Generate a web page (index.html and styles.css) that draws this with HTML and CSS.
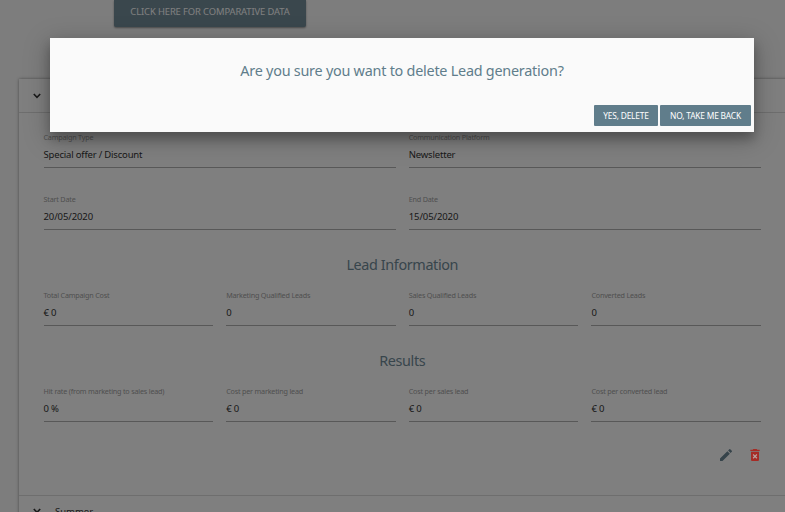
FILE: index.html
```html
<!DOCTYPE html>
<html lang="en">
<head>
<meta charset="utf-8">
<title>Campaigns</title>
<link rel="stylesheet" href="styles.css">
</head>
<body>
<main class="page">
  <button class="compare">CLICK HERE FOR COMPARATIVE DATA</button>
  <section class="card">
    <header class="row-head">
      <svg class="chevron" viewBox="0 0 8 6"><path d="M0.8 1l3.2 3.3L7.2 1"/></svg>
    </header>
    <div class="details">
      <div class="fields two first">
        <div class="field"><label>Campaign Type</label><p>Special offer / Discount</p></div>
        <div class="field"><label>Communication Platform</label><p>Newsletter</p></div>
      </div>
      <div class="fields two second">
        <div class="field"><label>Start Date</label><p>20/05/2020</p></div>
        <div class="field"><label>End Date</label><p>15/05/2020</p></div>
      </div>
      <h2>Lead Information</h2>
      <div class="fields four leads">
        <div class="field"><label>Total Campaign Cost</label><p>€ 0</p></div>
        <div class="field"><label>Marketing Qualified Leads</label><p>0</p></div>
        <div class="field"><label>Sales Qualified Leads</label><p>0</p></div>
        <div class="field"><label>Converted Leads</label><p>0</p></div>
      </div>
      <h2>Results</h2>
      <div class="fields four results">
        <div class="field"><label>Hit rate (from marketing to sales lead)</label><p>0 %</p></div>
        <div class="field"><label>Cost per marketing lead</label><p>€ 0</p></div>
        <div class="field"><label>Cost per sales lead</label><p>€ 0</p></div>
        <div class="field"><label>Cost per converted lead</label><p>€ 0</p></div>
      </div>
      <div class="actions">
        <svg class="edit" viewBox="0 0 24 24"><path d="M3 17.25V21h3.75L17.81 9.94l-3.75-3.75L3 17.25zM20.71 7.04a1 1 0 0 0 0-1.41l-2.34-2.34a1 1 0 0 0-1.41 0l-1.83 1.83 3.75 3.75 1.83-1.83z"/></svg>
        <svg class="delete" viewBox="0 0 24 24"><path class="cross" d="M8 10h8v8H8z"/><path d="M6 19c0 1.1.9 2 2 2h8c1.1 0 2-.9 2-2V7H6v12zm2.46-7.12l1.41-1.41L12 12.59l2.12-2.12 1.41 1.41L13.41 14l2.12 2.12-1.41 1.41L12 15.41l-2.12 2.12-1.41-1.41L10.59 14l-2.13-2.12zM15.5 4l-1-1h-5l-1 1H5v2h14V4z"/></svg>
      </div>
    </div>
    <header class="row-head next">
      <svg class="chevron" viewBox="0 0 8 6"><path d="M0.8 1l3.2 3.3L7.2 1"/></svg>
      <span>Summer</span>
    </header>
  </section>
</main>
<div class="overlay"></div>
<div class="dialog" role="dialog">
  <h1>Are you sure you want to delete Lead generation?</h1>
  <div class="buttons"><button class="yes">YES, DELETE</button><button class="no">NO, TAKE ME BACK</button></div>
</div>
</body>
</html>
```
FILE: styles.css
```css
* { box-sizing: border-box; }
body {
  margin: 0;
  height: 512px;
  overflow: hidden;
  background: #fafafa;
  font-family: "Noto Sans", "Open Sans", sans-serif;
}
button {
  border: 0;
  padding: 0;
  font-family: inherit;
  color: #fff;
  background: #607d8b;
  white-space: nowrap;
}
.page { height: 512px; overflow: hidden; }
.compare {
  display: block;
  width: 192px;
  height: 27px;
  margin-left: 114px;
  padding-bottom: 4px;
  border-radius: 0 0 2px 2px;
  background: #748e9b;
  font-size: 9.4px;
  line-height: 23px;
  letter-spacing: -0.1px;
  box-shadow: 0 1px 2px rgba(0, 0, 0, .4);
}
.card {
  width: 790px;
  margin: 52px 0 0 19px;
  background: #fff;
  box-shadow: 0 0 3px rgba(0, 0, 0, .4);
}
.row-head {
  display: flex;
  align-items: center;
  height: 34px;
  padding-left: 14px;
  border-bottom: 1px solid #dcdcdc;
  font-size: 9.5px;
}
.row-head span { margin-left: 14px; color: #333; }
.next { height: 33px; border-top: 1px solid #dcdcdc; }
.chevron { width: 8px; height: 6px; fill: none; stroke: #333; stroke-width: 1.6; }
.next .chevron { margin-top: -2px; }
.next span { margin-top: -1px; }
.details { width: 742px; height: 382px; padding-left: 24.5px; }
.fields { display: grid; column-gap: 13px; }
.two { grid-template-columns: repeat(2, 1fr); }
.four { grid-template-columns: repeat(4, 1fr); }
.first { padding-top: 18px; height: 55px; }
.second { margin-top: 25px; height: 37px; }
.field { height: 37px; border-bottom: 1px solid #b0b0b0; }
.field label {
  display: block;
  height: 14px;
  font-size: 7.2px;
  line-height: 12px;
  color: #a0a0a0;
  white-space: nowrap;
  letter-spacing: -0.19px;
}
.field p {
  margin: 0;
  padding-top: 1px;
  font-size: 9.5px;
  line-height: 18px;
  color: #333;
  letter-spacing: -0.18px;
}
.second p { letter-spacing: -0.1px; }
.details h2 {
  margin: 23px 0 0;
  height: 24px;
  font-size: 14.4px;
  font-weight: 400;
  line-height: 24px;
  letter-spacing: -0.38px;
  text-align: center;
  color: #708b98;
}
.leads, .results { margin-top: 12px; }
.actions {
  display: flex;
  gap: 13px;
  justify-content: flex-end;
  margin: 25px -2px 0 0;
}
.actions svg { width: 16px; height: 16px; }
.edit { fill: #6c8794; }
.delete { position: relative; z-index: 1; fill: #a62b25; }
.cross { fill: #b8a09e; }
.overlay { position: absolute; inset: 0; background: rgba(0, 0, 0, .5); }
.dialog {
  position: absolute;
  z-index: 2;
  top: 38px;
  left: 50px;
  width: 704px;
  height: 94px;
  padding: 20px 3px 0;
  background: #fafafa;
  box-shadow: 0 7px 10px rgba(0, 0, 0, .24), 0 6px 24px 2px rgba(0, 0, 0, .22);
}
.dialog h1 {
  margin: 0;
  height: 47px;
  font-size: 14.4px;
  font-weight: 400;
  line-height: 26px;
  letter-spacing: -0.24px;
  text-align: center;
  color: #607d8b;
}
.buttons { display: flex; justify-content: flex-end; gap: 2px; }
.buttons button { height: 21px; border-radius: 1px; font-size: 8.4px; line-height: 21px; letter-spacing: -0.2px; }
.yes { width: 64px; }
.no { width: 91px; }
```
